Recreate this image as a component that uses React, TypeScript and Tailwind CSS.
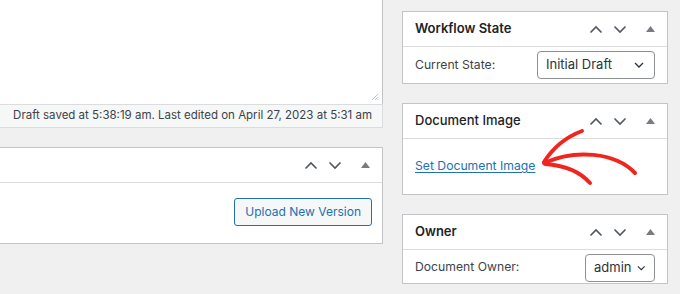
import type { ReactNode } from 'react'

const font = { fontFamily: 'Inter, "Liberation Sans", sans-serif' }

function HeaderControls() {
  return (
    <div className="flex items-center pr-[5px] text-[#50575e]">
      <span className="flex h-6 w-6 items-center justify-center">
        <svg width="14" height="9" viewBox="0 0 14 9" fill="none">
          <path d="M1.5 7.5 7 2l5.5 5.5" stroke="currentColor" strokeWidth="1.6" />
        </svg>
      </span>
      <span className="flex h-6 w-6 items-center justify-center">
        <svg width="14" height="9" viewBox="0 0 14 9" fill="none">
          <path d="M1.5 1.5 7 7l5.5-5.5" stroke="currentColor" strokeWidth="1.6" />
        </svg>
      </span>
      <span className="ml-[6px] flex h-6 w-6 items-center justify-center text-[#787c82]">
        <svg width="9" height="6" viewBox="0 0 9 6">
          <path d="M4.5 0 9 6H0z" fill="currentColor" />
        </svg>
      </span>
    </div>
  )
}

interface PanelProps {
  title?: string
  titleClass?: string
  bodyClass: string
  className?: string
  children: ReactNode
}

function Panel({ title, titleClass = 'font-semibold', bodyClass, className = '', children }: PanelProps) {
  return (
    <div className={`border border-[#c3c4c7] bg-white ${className}`}>
      <div className="flex h-[35px] items-center justify-between border-b border-[#dcdcde] pl-3">
        <h2 className={`text-[13px] text-[#1d2327] ${titleClass}`}>{title}</h2>
        <HeaderControls />
      </div>
      <div className={bodyClass}>{children}</div>
    </div>
  )
}

function FakeSelect({ value, className }: { value: string; className: string }) {
  return (
    <div
      className={`flex h-[28px] items-center justify-between gap-[6px] whitespace-nowrap rounded-[4px] border border-[#8c8f94] bg-white pl-[8px] pr-[8px] text-[13px] text-[#2c3338] ${className}`}
    >
      <span>{value}</span>
      <svg width="10" height="6" viewBox="0 0 10 6" fill="none">
        <path d="M1 1 5 5 9 1" stroke="#2c3338" strokeWidth="1.3" />
      </svg>
    </div>
  )
}

export default function App() {
  return (
    <div className="relative flex h-[294px] w-[680px] overflow-hidden bg-[#f0f0f1]" style={font}>
      <div className="flex w-[383px] shrink-0 flex-col">
        <div className="relative h-[104px] border-r border-[#c3c4c7] bg-white">
          <svg className="absolute bottom-[3px] right-[3px]" width="8" height="8" viewBox="0 0 8 8">
            <path d="M7 1 1 7M7 4 4 7M7 6.5 6.5 7" stroke="#c3c4c7" strokeWidth="1" />
          </svg>
        </div>
        <div className="flex h-[24px] items-center justify-end whitespace-nowrap border-y border-r border-[#dcdcde] bg-[#f6f7f7] pr-[10px] text-[11.5px] text-[#3c434a]">
          Draft saved at 5:38:19 am. Last edited on April 27, 2023 at 5:31 am
        </div>
        <Panel
          className="mt-[19px] border-l-0"
          bodyClass="flex h-[60px] items-start justify-end pr-[10px] pt-[15px]"
        >
          <button className="h-[28px] whitespace-nowrap rounded-[3px] border border-[#2271b1] bg-[#f6f7f7] px-[10px] text-[12px] text-[#2271b1]">
            Upload New Version
          </button>
        </Panel>
      </div>

      <div className="ml-[19px] flex w-[266px] shrink-0 flex-col gap-[19px] pt-[11px]">
        <Panel title="Workflow State" bodyClass="flex h-[36px] items-center justify-between pl-3 pr-[12px]">
          <span className="text-[12.2px] text-[#3c434a]">Current State:</span>
          <FakeSelect value="Initial Draft" className="w-[118px] pr-[10px]" />
        </Panel>
        <Panel title="Document Image" titleClass="font-medium" bodyClass="h-[55px] pl-3 pt-[13px]">
          <a href="#" className="text-[12.2px] text-[#2271b1] underline underline-offset-2">
            Set Document Image
          </a>
        </Panel>
        <Panel title="Owner" bodyClass="flex h-[33px] items-start justify-between pl-3 pr-[12px] pt-[4px]">
          <span className="pt-[4px] text-[12.2px] text-[#3c434a]">Document Owner:</span>
          <FakeSelect value="admin" className="w-[70px]" />
        </Panel>
      </div>

      <svg className="pointer-events-none absolute left-0 top-0" width="680" height="294" viewBox="0 0 680 294" fill="none">
        <g stroke="#f0261e" strokeWidth="4" strokeLinecap="round" strokeLinejoin="round">
          <path d="M544 163 C 575 149, 615 152, 635 173" />
          <path d="M544 162 Q 558 140 582 131" />
          <path d="M545 164 Q 575 166 590 183" />
        </g>
      </svg>
    </div>
  )
}
